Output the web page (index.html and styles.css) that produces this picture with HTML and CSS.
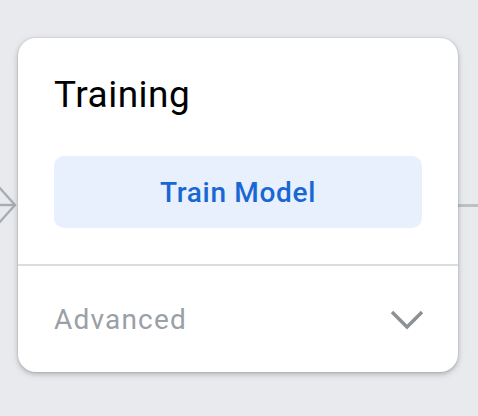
FILE: index.html
```html
<!DOCTYPE html>
<html>
<head>
<meta charset="utf-8">
<link rel="stylesheet" href="styles.css">
</head>
<body>
<div class="canvas">
  <svg class="edge-in" width="18" height="44" viewBox="0 0 18 44" aria-hidden="true">
    <polyline points="-2,3 15,22 -2,41" fill="none" stroke="#a9adb2" stroke-width="2.4"/>
    <line x1="-2" y1="22" x2="15" y2="22" stroke="#a9adb2" stroke-width="2.4"/>
  </svg>
  <div class="edge-out"></div>
  <div class="card">
    <div class="card-main">
      <div class="card-title">Training</div>
      <button class="train-btn">Train Model</button>
    </div>
    <div class="card-advanced">
      <span class="adv-label">Advanced</span>
      <svg class="chevron" width="34" height="20" viewBox="0 0 34 20" aria-hidden="true">
        <polyline points="2,2 17,17 32,2" fill="none" stroke="#8c9196" stroke-width="3.4"/>
      </svg>
    </div>
  </div>
</div>
</body>
</html>
```
FILE: styles.css
```css
* { box-sizing: border-box; }
html, body {
  margin: 0;
  padding: 0;
  background: #e8eaed;
  font-family: Roboto, "Noto Sans", Arial, sans-serif;
}
.canvas {
  position: relative;
  width: 478px;
  height: 416px;
  padding: 38px 0 0 18px;
}
.edge-in {
  position: absolute;
  left: 0;
  top: 183px;
}
.edge-out {
  position: absolute;
  left: 458px;
  top: 204px;
  width: 20px;
  height: 3px;
  background: #bdc1c6;
}
.card {
  position: relative;
  width: 440px;
  height: 334px;
  background: #fff;
  border-radius: 18px;
  box-shadow: 0 0 0 1px rgba(60,64,67,0.06), 0 2px 4px rgba(60,64,67,0.28), 0 2px 8px rgba(60,64,67,0.10);
  display: flex;
  flex-direction: column;
}
.card-main {
  padding: 35px 36px 36px;
  display: flex;
  flex-direction: column;
  gap: 39px;
  border-bottom: 2px solid #dadce0;
}
.card-title {
  font-size: 37px;
  line-height: 44px;
  color: #000;
  font-weight: 400;
  letter-spacing: 0.5px;
}
.train-btn {
  height: 72px;
  width: 100%;
  border: 0;
  border-radius: 10px;
  background: #e8f0fe;
  color: #1967d2;
  font-family: inherit;
  font-size: 28px;
  font-weight: 500;
  letter-spacing: 0.7px;
  padding: 0;
}
.card-advanced {
  flex: 1;
  display: flex;
  align-items: center;
  justify-content: space-between;
  padding: 0 34px 0 36px;
}
.adv-label {
  font-size: 28px;
  color: #9aa0a6;
  font-weight: 400;
  letter-spacing: 1.2px;
}
.chevron { display: block; margin-top: 2px; }
```
